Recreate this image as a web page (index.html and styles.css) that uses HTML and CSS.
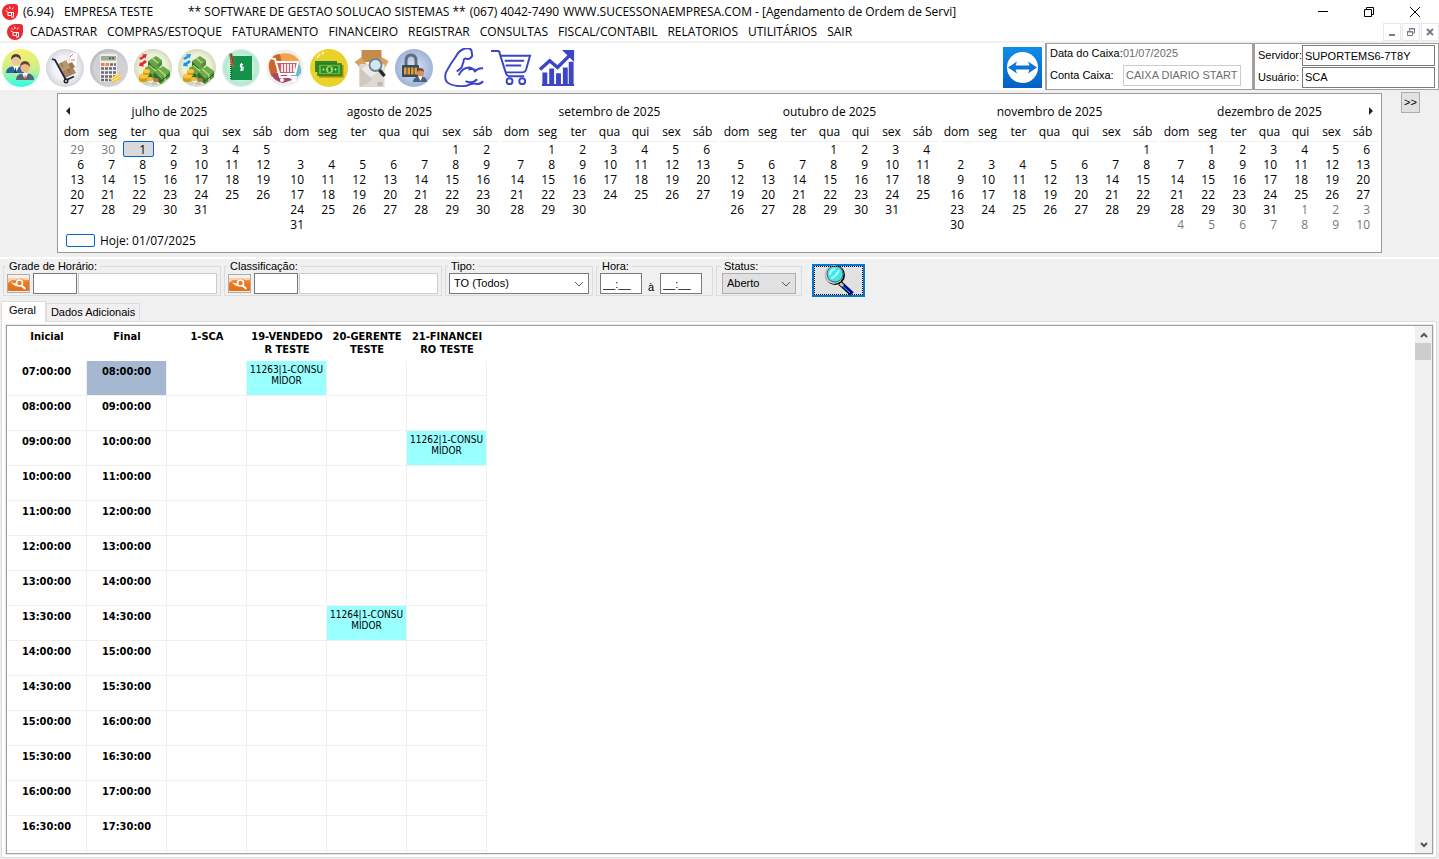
FILE: index.html
```html
<!DOCTYPE html>
<html lang="pt-BR">
<head>
<meta charset="utf-8">
<title>Agendamento de Ordem de Serviço</title>
<link rel="stylesheet" href="styles.css">
</head>
<body>
<svg class="defs" aria-hidden="true">
  <defs>
    <linearGradient id="g-users" x1="0" y1="0" x2="0" y2="1"><stop offset="0" stop-color="#f8f06e"/><stop offset=".55" stop-color="#c9f08a"/><stop offset="1" stop-color="#1ffff0"/></linearGradient>
    <linearGradient id="g-grey" x1="0" y1="0" x2="1" y2="1"><stop offset="0" stop-color="#b5b5b8"/><stop offset="1" stop-color="#dcdcde"/></linearGradient>
    <radialGradient id="g-light"><stop offset=".6" stop-color="#f4f4f6"/><stop offset="1" stop-color="#d4d6dc"/></radialGradient>
    <radialGradient id="g-cream"><stop offset=".7" stop-color="#eef1d9"/><stop offset="1" stop-color="#d5dabd"/></radialGradient>
    <radialGradient id="g-mint"><stop offset=".5" stop-color="#d8f5e6"/><stop offset=".85" stop-color="#b5e8d0"/><stop offset="1" stop-color="#d9efe6"/></radialGradient>
    <radialGradient id="g-lock"><stop offset="0" stop-color="#dde6f6"/><stop offset="1" stop-color="#9fb3d8"/></radialGradient>
    <linearGradient id="g-tv" x1="0" y1="0" x2="0" y2="1"><stop offset="0" stop-color="#0e8ee9"/><stop offset="1" stop-color="#0560c4"/></linearGradient>
    <linearGradient id="g-orange" x1="0" y1="0" x2="0" y2="1"><stop offset="0" stop-color="#f7a65c"/><stop offset=".35" stop-color="#ee7a22"/><stop offset="1" stop-color="#e56f12"/></linearGradient>
    <symbol id="logo" viewBox="0 0 16 16">
      <path d="M8 0h5q3 0 3 3v5a8 8 0 1 1-8-8z" fill="#ec2830"/>
      <path d="M4 6.500q1 2 3 2h4.500v4.500H9M6 9v2.500h3.500V8.500M4.500 4l1.500 1.500M7.800 2.500v2.500M11.500 3.500L10 5.500" fill="none" stroke="#fff"/>
    </symbol>
    <symbol id="cash" viewBox="0 0 38 38">
      <circle cx="19" cy="19" r="19" fill="url(#g-cream)"/>
      <path d="M14 12l8-5 6 4-7 6z" fill="#6aa544"/><path d="M14 12l7 5v5l-7-5z" fill="#3c7f2e"/><path d="M21 17l7-6v5l-7 6z" fill="#4b9138"/>
      <path d="M11 19l8-5 7 5-8 6z" fill="#67a340"/><path d="M11 19l7 6v6l-7-5z" fill="#34772b"/><path d="M18 25l8-6v5l-8 7z" fill="#4b9138"/>
      <path d="M20 23l9-6 7 5-9 7z" fill="#6dab45"/><path d="M20 23l7 6v6l-7-5z" fill="#34772b"/><path d="M27 29l9-7v6l-9 7z" fill="#4b9138"/>
      <path d="M18 9l6 5M15 16l7 6M24 20l7 6v6M14 21v6" stroke="#b7d68b" stroke-width="1.500" fill="none"/>
      <path d="M14 14.500l7 5M11 22l7 6M20 26l7 6 9-7" stroke="#275f22" fill="none"/>
      <path d="M5 27v4a4 2 0 0 0 9 0v-4z" fill="#d79b18"/><ellipse cx="9.500" cy="27" rx="4.500" ry="2.500" fill="#f6c63e"/>
      <path d="M9 22v3a4 2 0 0 0 7 0v-3z" fill="#d79b18"/><ellipse cx="12.500" cy="22" rx="3.500" ry="2" fill="#f6c63e"/>
      <ellipse cx="16" cy="30" rx="3" ry="2" fill="#f0bc33"/><ellipse cx="22" cy="31" rx="3" ry="2" fill="#b9784c"/>
      <ellipse cx="13" cy="34" rx="3" ry="1.500" fill="#c6d3d5"/><ellipse cx="20" cy="34.500" rx="3" ry="1.500" fill="#b9c8ca"/>
    </symbol>
    <symbol id="arrows" viewBox="0 0 38 38">
      <path d="M5 9l4-2-1-1.500 5-.5-1.500 4.500-1-1L7 11zM13 13l-4 3 1.500 1.500-5.500-.5 1-4 1 1 4-3z"/>
    </symbol>
    <symbol id="find" viewBox="0 0 21 17">
      <rect width="21" height="17" fill="#f3f0ee"/>
      <rect y="3" width="21" height="13" rx="1" fill="url(#g-orange)"/>
      <path d="M0 3h21v2h-5q-4-3-8 0H4L0 8z" fill="#fbd0aa"/>
      <path d="M3 7q3 2 5 1l3 3q-5 1-8-4z" fill="#fff"/>
      <circle cx="11.500" cy="8" r="3" fill="none" stroke="#fff" stroke-width="1.500"/><path d="M13.500 10.500l4 3.500" stroke="#fff" stroke-width="2"/>
    </symbol>
  </defs>
</svg>

<div class="window">
<header class="titlebar">
  <svg class="logo"><use href="#logo"/></svg>
  <h1 class="title"><span class="version">(6.94)</span><span class="company">EMPRESA TESTE</span><span>** SOFTWARE DE GESTAO SOLUCAO SISTEMAS **</span><span class="phone">(067) 4042-7490</span><span>WWW.SUCESSONAEMPRESA.COM - [Agendamento de Ordem de Servi]</span></h1>
  <div class="window-buttons">
    <button aria-label="Minimizar"><svg viewBox="0 0 12 12"><path d="M1 5.500h10"/></svg></button>
    <button aria-label="Restaurar"><svg viewBox="0 0 12 12"><path d="M1.500 3.500h7v7h-7zM3.500 3.500v-2h7v7h-2"/></svg></button>
    <button aria-label="Fechar"><svg viewBox="0 0 12 12"><path d="M1 1l10 10M11 1L1 11"/></svg></button>
  </div>
</header>

<nav class="menubar">
  <svg class="logo"><use href="#logo"/></svg>
  <a href="#">CADASTRAR</a><a href="#">COMPRAS/ESTOQUE</a><a href="#">FATURAMENTO</a><a href="#">FINANCEIRO</a><a href="#">REGISTRAR</a><a href="#">CONSULTAS</a><a href="#">FISCAL/CONTABIL</a><a href="#">RELATORIOS</a><a href="#">UTILITÁRIOS</a><a href="#">SAIR</a>
  <div class="child-buttons">
    <button aria-label="Minimizar janela"><svg viewBox="0 0 10 10"><path d="M2 8h6" stroke-width="2"/></svg></button>
    <button aria-label="Restaurar janela"><svg viewBox="0 0 10 10"><path d="M1.500 5h5v3.500h-5zM3.500 4V2h5v4h-2M1 4.500h6M3 1.500h6"/></svg></button>
    <button aria-label="Fechar janela"><svg viewBox="0 0 10 10"><path d="M2 2l6 6M8 2L2 8" stroke-width="2"/></svg></button>
  </div>
</nav>

<div class="toolbar">
  <div class="tools">
    <button aria-label="Clientes"><svg viewBox="0 0 38 38"><circle cx="19" cy="19" r="19" fill="url(#g-users)"/>
      <path d="M4 24q0-6 7-6.500h5q6 .5 6 6.500z" fill="#2463a8"/><path d="M11 17l3 7 3-7z" fill="#fff"/><path d="M13.500 18l-1 6h2.500z" fill="#333"/><circle cx="14" cy="12" r="4.500" fill="#f1c59c"/><path d="M9 11q0-6 5-6t5 6q-2-3-5-3.500Q11 8 9 11z" fill="#4c3a35"/>
      <path d="M14 31q0-6 7-6.500h5q6 .5 6 6.500z" fill="#566478"/><path d="M20 24l3 7 3-7z" fill="#fff"/><path d="M23 25l-1 6h2z" fill="#b93b2e"/><circle cx="23" cy="19" r="4.500" fill="#eeb98c"/><path d="M18 18q0-6 5-6t5 6q-2-3-5-3-3 0-5 3z" fill="#6d4434"/></svg></button>
    <button aria-label="Compras"><svg viewBox="0 0 38 38"><circle cx="19" cy="19" r="19" fill="url(#g-light)"/>
      <path d="M24 3l8 1-1 14-8-1z" fill="#fff" stroke="#ddd"/><path d="M24 8l3-3M25 11h4" stroke="#d47861"/>
      <path d="M12 15l8-4 4 7-8 4z" fill="#b8986f"/><path d="M16 22l10-5 4 7-11 5z" fill="#a8855d"/><path d="M22 15l4-2 3 5-4 2z" fill="#9b7a52"/><path d="M15 14l2 4M22 20l2 4" stroke="#80603e"/>
      <path d="M6 10l3 1 11 20 8-3.500" fill="none" stroke="#20243a" stroke-width="1.800"/><circle cx="20" cy="32" r="2.500" fill="#20243a"/><circle cx="20" cy="32" r="1" fill="#ddd"/></svg></button>
    <button aria-label="Calculadora"><svg viewBox="0 0 38 38"><circle cx="19" cy="19" r="19" fill="url(#g-grey)"/><circle cx="19" cy="19" r="16.500" fill="#d1d1d4"/>
      <rect x="10" y="5" width="17" height="28" rx="1" fill="#eee"/><rect x="11" y="7" width="15" height="4.500" fill="#9fae88"/><path d="M19 9.300h6" stroke="#56664a" stroke-width="2" stroke-dasharray="2 1"/>
      <path d="M11 15.500h8" stroke="#e3835c" stroke-width="3" stroke-dasharray="3.500 1"/><path d="M20 15.500h6M11 19.500h15M11 23.500h15M11 27.500h15M11 31h15" stroke="#6a6b74" stroke-width="2.700" stroke-dasharray="3 1"/>
      <path d="M20 30l9-6 3 5-9 5z" fill="#f0c94d"/><path d="M21 30l8-5M22 32l9-5" stroke="#fff09c"/></svg></button>
    <button aria-label="Contas a pagar"><svg viewBox="0 0 38 38"><use href="#cash"/><use href="#arrows" fill="#e9262c"/></svg></button>
    <button aria-label="Contas a receber"><svg viewBox="0 0 38 38"><use href="#cash"/><use href="#arrows" fill="#1c95e9"/></svg></button>
    <button aria-label="Caderno de caixa"><svg viewBox="0 0 38 38"><circle cx="19" cy="19" r="19" fill="url(#g-mint)"/>
      <rect x="9" y="7" width="21" height="24" fill="#14924b"/><path d="M9 7v24" stroke="#0b6a35" stroke-width="2" stroke-dasharray="1 1"/><path d="M7 5l3-1 3 11-1 4-3-3z" fill="#a5683c"/><path d="M9 5l3 11" stroke="#6b432b"/>
      <path d="M21 15.500h-2.500v2.500h2.500v3h-3M19.500 14v8" fill="none" stroke="#fff" stroke-width="1.200"/></svg></button>
    <button aria-label="Vendas"><svg viewBox="0 0 38 38"><circle cx="19" cy="19" r="18.500" fill="#f1eeee"/>
      <path d="M3 14Q6 5 14 5q7 1 5 11L6 28q-4-7-3-14z" fill="#c9682b"/><path d="M14 5q14-3 20 8l-4 8-14-6z" fill="#f3a34b"/><path d="M31 11q5 7 4 13l-5 6-6-4z" fill="#69bccd"/><path d="M5 25q4 8 12 9l9-3-9-8z" fill="#aa4668"/>
      <path d="M11 13h21l-3 12H14z" fill="#c9606a"/>
      <path d="M4 9l5 1 5 18h17M10 13h22l-3 12H14" fill="none" stroke="#fff" stroke-width="2"/><path d="M16 15v8M19 15v8M22 15v8M25 15v8M28 15v8" stroke="#fff" stroke-width="1.700"/><circle cx="16" cy="31" r="2" fill="#fff"/><circle cx="28" cy="31" r="2" fill="#fff"/></svg></button>
    <button aria-label="Caixa"><svg viewBox="0 0 38 38"><circle cx="19" cy="19" r="19" fill="#e9d329"/><path d="M7 9l3-4M12 5l2-2" stroke="#fff6a5" stroke-width="2"/>
      <path d="M9 27h23V16" fill="none" stroke="#9f8d13" stroke-width="3"/><rect x="5" y="12" width="22" height="11" fill="#34872a"/><rect x="8" y="15" width="23" height="11" fill="#63ba35" stroke="#2c7928" stroke-width="1.500"/><rect x="11" y="17" width="17" height="7" fill="#298c2c"/><circle cx="19.500" cy="20.500" r="3.500" fill="#9bd956"/><path d="M21 19h-2.500v1.500h2V22H18M19.500 18v5" fill="none" stroke="#257d27"/><circle cx="13.500" cy="20.500" r="1" fill="#d6f093"/><circle cx="25.500" cy="20.500" r="1" fill="#d6f093"/></svg></button>
    <button class="box-tool" aria-label="Consulta de estoque"><svg viewBox="2 0 34 38"><path d="M9 1h20v12H9z" fill="#c68b49"/><path d="M2 13l7-5 5 7-5 5z" fill="#d8a263"/><path d="M29 8l7 4-4 8-7-5z" fill="#d8a263"/><path d="M7 15h25v23H7z" fill="#ddd8d2"/><path d="M7 22l10-8 15 2v3L19 28z" fill="#eeeae4"/><path d="M7 18v20l13-7z" fill="#cfc8c0"/><path d="M25 34h5M25 36h5" stroke="#9d9b97"/><circle cx="23" cy="16" r="6" fill="#d1e8ee" stroke="#6e8494" stroke-width="1.800"/><path d="M27 21l5 6" stroke="#202833" stroke-width="3.500"/></svg></button>
    <button aria-label="Bloqueio"><svg viewBox="0 0 38 38"><circle cx="19" cy="19" r="19" fill="url(#g-lock)"/>
      <path d="M11 18v-6q0-6 5-6t5 6v6" fill="none" stroke="#626d7a" stroke-width="3"/><rect x="7" y="16" width="17" height="12" rx="1" fill="#344c5d"/><path d="M9 22h13.500" stroke="#eb9c2a" stroke-width="7" stroke-dasharray="2.500 1"/>
      <path d="M18 33q0-5 6-5.500h3q5 .5 5 5.500z" fill="#496176"/><path d="M23 27l2.500 5 2-5z" fill="#fff"/><circle cx="25.500" cy="24" r="3.500" fill="#d49169"/><path d="M22 23q0-4 3.500-4t3.500 4q-4-3-7 0z" fill="#854a37"/></svg></button>
    <button class="line-tool" aria-label="Suporte"><svg viewBox="0 0 42 40"><path d="M22 39Q9 40 3 35q-3-4-1-10 4-8 10-16 3-6 8-8 5-2 8 1l1 6q-2 4-6 3-3-1-3 3l-2 6q-3 3-5 4M15 28q4-8 11-8 5 1 6 5M25 22q5-1 8 1 3-3 7-2M22 34q7 3 12-2M22 39q8-4 12-2 4 0 6-3"/></svg></button>
    <button class="line-tool" aria-label="Carrinho"><svg viewBox="0 0 42 40"><path d="M0 3h7q2 0 2 3l6 19q1 4 4 4h15M9 8h31l-4 14q-1 3-4 3H15M14 13h20M15 18h16"/><circle cx="19" cy="34" r="3"/><circle cx="32" cy="34" r="3"/></svg></button>
    <button class="line-tool" aria-label="Indicadores"><svg viewBox="0 0 42 40"><path d="M2 22l10-9 8 7L34 6" stroke-width="3.500"/><path d="M27 3h9v9z" fill="#3b45c7"/><path d="M7 38V25M14 38V21M21 38V26M28 38V20M34 38V14" stroke-width="5"/><path d="M4 38h33"/></svg></button>
  </div>
  <div class="status-area">
    <button class="teamviewer" aria-label="Acesso remoto"><svg viewBox="0 0 39 41"><rect width="39" height="41" fill="url(#g-tv)"/><circle cx="19.500" cy="20.500" r="15.500" fill="#fff"/><path d="M5 20.500l9-6-1.500 4h14l-1.500-4 9 6-9 6 1.500-4h-14l1.500 4z" fill="#0b74d8"/></svg></button>
    <div class="info cash-info">
      <span>Data do Caixa:</span><output>01/07/2025</output>
      <label for="conta">Conta Caixa:</label><input id="conta" value="CAIXA DIARIO START SISTEMAS" disabled>
    </div>
    <div class="info user-info">
      <label for="servidor">Servidor:</label><input id="servidor" value="SUPORTEMS6-7T8Y">
      <label for="usuario">Usuário:</label><input id="usuario" value="SCA">
    </div>
  </div>
</div>

<section class="calendar-area">
  <div class="calendar">
    <button class="nav-month prev" aria-label="Meses anteriores"></button>
    <button class="nav-month next" aria-label="Próximos meses"></button>
    <div class="months" id="months"></div>
    <div class="today"><i class="today-box"></i><span>Hoje: 01/07/2025</span></div>
  </div>
  <button class="expand">&gt;&gt;</button>
</section>

<form class="filters">
  <fieldset class="lookup"><legend>Grade de Horário:</legend>
    <button type="button" class="find" aria-label="Buscar grade"><svg><use href="#find"/></svg></button><input class="code" aria-label="Código da grade"><input class="desc" aria-label="Descrição da grade" disabled></fieldset>
  <fieldset class="lookup"><legend>Classificação:</legend>
    <button type="button" class="find" aria-label="Buscar classificação"><svg><use href="#find"/></svg></button><input class="code" aria-label="Código da classificação"><input class="desc" aria-label="Descrição da classificação" disabled></fieldset>
  <fieldset class="type"><legend>Tipo:</legend><select aria-label="Tipo"><option>TO (Todos)</option></select></fieldset>
  <fieldset class="hours"><legend>Hora:</legend><input aria-label="Hora inicial" value="__:__"><span>à</span><input aria-label="Hora final" value="__:__"></fieldset>
  <fieldset class="state"><legend>Status:</legend><select aria-label="Status"><option>Aberto</option></select></fieldset>
  <button type="button" class="search" aria-label="Pesquisar"><svg viewBox="0 0 32 32"><path d="M17 19l12 11" stroke="#000" stroke-width="5"/><path d="M17 19l3 3" stroke="#c8c8c8" stroke-width="3"/><path d="M21 22l8 7.500" stroke="#0000d0" stroke-width="3"/><path d="M20 22.500l7 6.500" stroke="#00e8ff"/><circle cx="12" cy="11" r="10" fill="#000"/><circle cx="11" cy="10.500" r="9.500" fill="#c4c4c4"/><circle cx="12" cy="10" r="8" fill="#3ee6ec" stroke="#4a6a6a"/><path d="M7 11q0-5 5-6M8 14q5-1 8-8" stroke="#b6ffff" stroke-width="2" fill="none"/></svg></button>
</form>

<main class="schedule">
  <div class="tabs"><button class="active">Geral</button><button>Dados Adicionais</button></div>
  <div class="panel">
    <div class="grid-box">
      <div class="grid-view"><table class="grid"><thead><tr><th>Inicial</th><th>Final</th><th>1-SCA</th><th>19-VENDEDO<br>R TESTE</th><th>20-GERENTE<br>TESTE</th><th>21-FINANCEI<br>RO TESTE</th></tr></thead><tbody id="slots"></tbody></table></div>
      <div class="scrollbar"><button aria-label="Rolar para cima"><svg viewBox="0 0 8 8"><path d="M1 6l3-3 3 3"/></svg></button><i class="thumb"></i><button class="down" aria-label="Rolar para baixo"><svg viewBox="0 0 8 8"><path d="M1 2l3 3 3-3"/></svg></button></div>
    </div>
  </div>
</main>
</div>
<script src="app.js"></script>
</body>
</html>
```
FILE: styles.css
```css
* { box-sizing: border-box; }
body { margin: 0; background: #f0f0f0; color: #000; font: 11px/13px "Liberation Sans", Arial, sans-serif; }
button, input, select { font: inherit; color: inherit; margin: 0; padding: 0; border-radius: 0; }
button { background: none; border: 0; }
svg { display: block; }
.defs { position: absolute; width: 0; height: 0; }
.window { display: flex; flex-direction: column; height: 100vh; overflow: hidden; }
.logo { width: 16px; height: 16px; flex: none; }

.titlebar { display: flex; align-items: center; height: 23px; padding-left: 2px; background: #fff; font: 12px/16px "Segoe UI", "Open Sans", sans-serif; }
.title { display: flex; margin: 0; padding-left: 5px; font: inherit; white-space: nowrap; }
.version { width: 41px; }
.company { width: 124px; }
.phone { padding: 0 4px; }
.window-buttons { display: flex; margin-left: auto; padding-right: 1px; }
.window-buttons button { display: grid; place-items: center; width: 46px; height: 20px; }
.window-buttons svg { width: 12px; height: 12px; fill: none; stroke: #000; }

.menubar { display: flex; align-items: center; height: 20px; padding-left: 7px; gap: 10px; background: #fff; border-bottom: 2px solid #f0f0f0; font: 12px/16px "Segoe UI", "Open Sans", sans-serif; }
.menubar a { color: inherit; text-decoration: none; white-space: nowrap; }
.menubar .logo { margin-right: -3px; }
.child-buttons { display: flex; gap: 1px; margin-left: auto; }
.child-buttons button { display: grid; place-items: center; width: 18px; height: 18px; border: 1px solid #e6e6e6; }
.child-buttons svg { width: 10px; height: 10px; fill: none; stroke: #708090; }

.toolbar { display: flex; justify-content: space-between; height: 47px; background: #fff; }
.tools { display: flex; align-items: center; gap: 6px; padding: 2px 0 0 2px; }
.tools svg { width: 38px; height: 38px; }
.tools .box-tool svg { width: 35px; }
.tools .line-tool { margin-left: 5px; }
.tools .line-tool + .line-tool { margin-left: 0; }
.tools .line-tool svg { width: 41px; height: 39px; fill: none; stroke: #3b45c7; stroke-width: 2; }
.status-area { display: flex; }
.teamviewer { padding: 3px 3px 2px 0; }
.teamviewer svg { width: 39px; height: 41px; }
.info { display: grid; align-items: center; padding: 1px 3px; border: 1px solid #a0a0a0; border-width: 1px 1px 1px 2px; white-space: nowrap; }
.info input { width: 100%; min-width: 0; height: 21px; padding: 0 2px; border: 1px solid #7a7a7a; background: #fff; }
.cash-info { grid-template-columns: 72px 118px; column-gap: 1px; width: 208px; }
.cash-info output { color: #6d6d6d; }
.cash-info input { border-color: #ccc; color: #6d6d6d; }
.user-info { grid-template-columns: 44px 1fr; width: 186px; }

.calendar-area { display: flex; align-items: flex-start; gap: 19px; padding: 3px 19px 4px 57px; border-bottom: 2px solid #fff; }
.calendar { position: relative; flex: 1; height: 160px; padding: 9px 3px 0; border: 1px solid #999; background: #fff; font: 12px/15px "Segoe UI", "Open Sans", sans-serif; }
.months { display: flex; gap: 3px; height: 130px; }
.month { flex: 1; }
.month table { width: 100%; table-layout: fixed; border-collapse: collapse; }
.month caption { height: 21px; line-height: 17px; }
.month th { height: 17px; padding: 0; border-bottom: 1px solid #f0f0f0; font-weight: 400; line-height: 16px; text-align: center; }
.month td { height: 15px; padding: 0 8px 0 0; line-height: 15px; text-align: right; }
.month .outside { color: #777; }
.month .current { background: #d9d9d9; outline: 1px solid #06c; outline-offset: -1px; border-radius: 2px; }
.nav-month { position: absolute; top: 13px; width: 4px; height: 8px; border: 4px solid transparent; }
.prev { left: 4px; border-right-color: #222; }
.next { right: 4px; border-left-color: #222; }
.today { display: flex; align-items: center; gap: 5px; padding: 0 5px; }
.today-box { width: 29px; height: 13px; border: 1px solid #06c; border-radius: 2px; }
.expand { width: 19px; height: 21px; margin-top: -1px; border: 1px solid #adadad; background: #e1e1e1; }

.filters { display: flex; align-items: flex-start; gap: 3px; padding: 1px 3px 4px; }
fieldset { display: flex; align-items: center; min-width: 0; height: 36px; margin: 0; padding: 0 3px 1px; border: 1px solid #dcdcdc; }
legend { margin-left: -1px; padding: 0 3px; }
fieldset input, fieldset select { height: 21px; border: 1px solid #7a7a7a; background: #fff; }
.lookup { width: 218px; }
.find { width: 23px; height: 19px; margin-right: 3px; border: 1px solid #adadad; background: #e1e1e1; }
.find svg { width: 21px; height: 17px; }
.lookup .code { width: 44px; }
.lookup .desc { width: 139px; min-width: 0; margin-left: 1px; border-color: #ccc; }
.type { width: 148px; }
fieldset select { width: 100%; padding: 0 4px; appearance: none; background: #fff url("data:image/svg+xml,%3Csvg xmlns='http://www.w3.org/2000/svg' width='10' height='6'%3E%3Cpath d='M1 1l4 4 4-4' fill='none' stroke='%23555'/%3E%3C/svg%3E") no-repeat right 4px center; }
.hours { width: 117px; }
.hours input { width: 42px; padding: 0 2px; }
.hours span { width: 18px; padding-top: 8px; text-align: center; }
.state { width: 86px; padding: 0 5px 1px; }
.state select { border-color: #adadad; background-color: #e1e1e1; }
.search { display: grid; place-items: center; width: 53px; height: 33px; margin: 4px 0 0 7px; border: 2px solid #0078d7; background: #e1e1e1; outline: 1px dotted #000; outline-offset: -3px; }
.search svg { width: 32px; height: 32px; margin-top: -2px; }

.schedule { display: flex; flex: 1; flex-direction: column; min-height: 0; padding: 0 2px 1px 1px; }
.tabs { display: flex; align-items: flex-end; height: 20px; }
.tabs button { height: 18px; padding: 0 4px; border: 1px solid #dcdcdc; border-bottom: 0; }
.tabs .active { height: 21px; margin-bottom: -1px; padding: 0 9px 3px 7px; background: #fff; z-index: 1; }
.panel { display: flex; flex: 1; min-height: 0; padding: 3px 3px 3px 4px; border: 1px solid #dcdcdc; background: #fff; }
.grid-box { display: flex; flex: 1; border: 1px solid #a0a0a0; outline: 1px solid #e8e8e8; background: #fff; }
.grid-view { flex: 1; overflow: hidden; }
.grid { border-spacing: 0; table-layout: fixed; width: 480px; font: bold 11px/13px Tahoma, "DejaVu Sans Condensed", sans-serif; text-align: center; }
.grid th, .grid td { height: 35px; padding: 4px 0 0; vertical-align: top; }
.grid td { border: 1px solid #f0f0f0; border-width: 0 1px 1px 0; }
.grid .selected { background: #a6b8d1; }
.grid .booked { padding-top: 3px; background: #9ff; font-weight: 400; font-size: 10px; line-height: 11px; }
.scrollbar { display: flex; flex-direction: column; width: 17px; background: #f0f0f0; }
.scrollbar button { display: grid; place-items: center; height: 17px; }
.scrollbar .down { margin-top: auto; }
.scrollbar svg { width: 8px; height: 8px; fill: none; stroke: #555; stroke-width: 2; }
.thumb { height: 17px; margin-right: 1px; background: #cdcdcd; }
```
FILE: app.js
```js
const weekdays = ["dom", "seg", "ter", "qua", "qui", "sex", "sáb"];
const names = ["julho", "agosto", "setembro", "outubro", "novembro", "dezembro"];
const firstMonth = 6;

function monthTable(index) {
  const month = firstMonth + index;
  const offset = new Date(2025, month, 1).getDay();
  const total = new Date(2025, month + 1, 0).getDate();
  let rows = "";
  for (let week = 0; week < 6; week++) {
    rows += "<tr>";
    for (let day = 0; day < 7; day++) {
      const n = week * 7 + day - offset + 1;
      let text = "";
      let cls = "";
      if (n >= 1 && n <= total) {
        text = n;
        if (index === 0 && n === 1) cls = "current";
      } else if ((n < 1 && index === 0) || (n > total && index === names.length - 1)) {
        text = new Date(2025, month, n).getDate();
        cls = "outside";
      }
      rows += `<td class="${cls}">${text}</td>`;
    }
    rows += "</tr>";
  }
  const head = weekdays.map(d => `<th>${d}</th>`).join("");
  return `<div class="month"><table><caption>${names[index]} de 2025</caption><thead><tr>${head}</tr></thead><tbody>${rows}</tbody></table></div>`;
}
document.getElementById("months").innerHTML = names.map((_, i) => monthTable(i)).join("");

const slots = [
  ["07:00", "08:00"], ["08:00", "09:00"], ["09:00", "10:00"], ["10:00", "11:00"], ["11:00", "12:00"],
  ["12:00", "13:00"], ["13:00", "14:00"], ["13:30", "14:30"], ["14:00", "15:00"], ["14:30", "15:30"],
  ["15:00", "16:00"], ["15:30", "16:30"], ["16:00", "17:00"], ["16:30", "17:30"]
];
const bookings = { "0-1": "11263", "2-3": "11262", "7-2": "11264" };

document.getElementById("slots").innerHTML = slots.map(([start, end], row) => {
  let cells = "";
  for (let col = 0; col < 4; col++) {
    const order = bookings[`${row}-${col}`];
    cells += order ? `<td class="booked">${order}|1-CONSU<br>MIDOR</td>` : "<td></td>";
  }
  return `<tr><td>${start}:00</td><td class="${row === 0 ? "selected" : ""}">${end}:00</td>${cells}</tr>`;
}).join("") + `<tr>${"<td></td>".repeat(6)}</tr>`;
```
